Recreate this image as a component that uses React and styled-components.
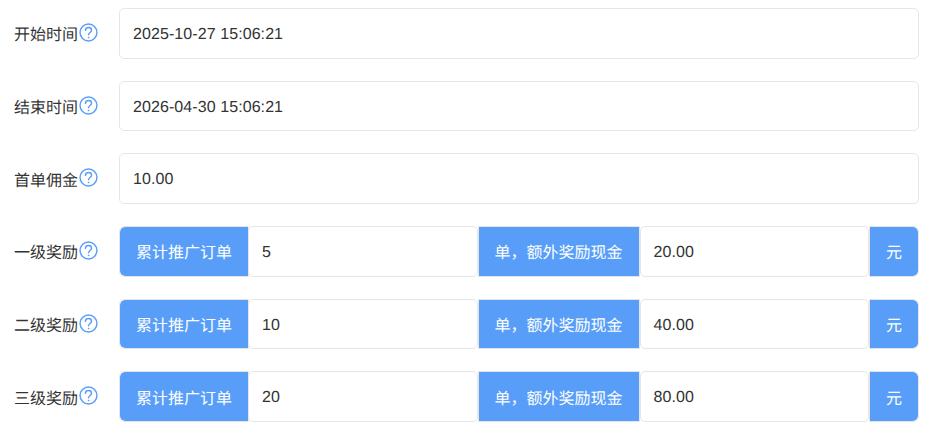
import React from "react";
import styled, { createGlobalStyle } from "styled-components";

const GlobalStyle = createGlobalStyle`
  html, body {
    margin: 0;
    padding: 0;
    background: #fff;
    overflow: hidden;
  }
  * {
    box-sizing: border-box;
  }
`;

const Form = styled.form`
  display: flex;
  flex-direction: column;
  gap: 22.15px;
  width: 936px;
  height: 438px;
  padding: 8.2px 17px 0 14px;
  font-family: "Liberation Sans", "Noto Sans CJK SC", sans-serif;
  font-size: 16px;
  color: #333;
  text-rendering: geometricPrecision;
`;

const Row = styled.div`
  display: flex;
  align-items: center;
  height: 50.5px;
`;

const Label = styled.label`
  display: flex;
  align-items: center;
  width: 105px;
  flex-shrink: 0;
  color: #333;
`;

const Help = styled.svg`
  width: 19px;
  height: 19px;
  margin: -2px 0 0 1px;
  flex-shrink: 0;
`;

const Field = styled.div`
  flex: 1;
  min-width: 0;
  height: 100%;
  display: flex;
  align-items: center;
  padding: 3px 13px 0;
  margin-left: ${(p) => (p.$overlap ? "-1px" : "0")};
  background: #fff;
  border: 1px solid #e6e6e6;
  border-radius: 5px;
  font-size: 16px;
  letter-spacing: 0.08px;
  color: #333;
`;

const Group = styled.div`
  flex: 1;
  display: flex;
  height: 100%;
`;

const Addon = styled.div`
  flex-shrink: 0;
  display: flex;
  align-items: center;
  justify-content: center;
  padding: 0 16px;
  background: #589ef8;
  background-clip: padding-box;
  border: 1px solid #e6e6e6;
  color: #fff;
  font-size: 16px;
  border-radius: ${(p) =>
    p.$side === "left" ? "6px 0 0 6px" : p.$side === "right" ? "0 6px 6px 0" : "0"};
`;

const HelpIcon = () => (
  <Help viewBox="0 0 20 20" fill="none" stroke="#589ef8" strokeWidth="1.5" strokeLinecap="round">
    <circle cx="10" cy="10" r="8.9" />
    <path d="M6.8 7.8c0-1.8 1.4-3 3.2-3s3.2 1.2 3.2 2.8c0 2.3-3.2 2.4-3.2 4.8" />
    <circle cx="10" cy="15.2" r="0.5" fill="#589ef8" strokeWidth="0.7" />
  </Help>
);

const plainRows = [
  { label: "开始时间", value: "2025-10-27 15:06:21" },
  { label: "结束时间", value: "2026-04-30 15:06:21" },
  { label: "首单佣金", value: "10.00" },
];

const rewardRows = [
  { label: "一级奖励", count: "5", money: "20.00" },
  { label: "二级奖励", count: "10", money: "40.00" },
  { label: "三级奖励", count: "20", money: "80.00" },
];

const App = () => {
  return (
    <>
      <GlobalStyle />
      <Form>
        {plainRows.map((row) => (
          <Row key={row.label}>
            <Label>
              {row.label}
              <HelpIcon />
            </Label>
            <Field>{row.value}</Field>
          </Row>
        ))}
        {rewardRows.map((row) => (
          <Row key={row.label}>
            <Label>
              {row.label}
              <HelpIcon />
            </Label>
            <Group>
              <Addon $side="left">累计推广订单</Addon>
              <Field $overlap>{row.count}</Field>
              <Addon>单，额外奖励现金</Addon>
              <Field>{row.money}</Field>
              <Addon $side="right">元</Addon>
            </Group>
          </Row>
        ))}
      </Form>
    </>
  );
};

export default App;
